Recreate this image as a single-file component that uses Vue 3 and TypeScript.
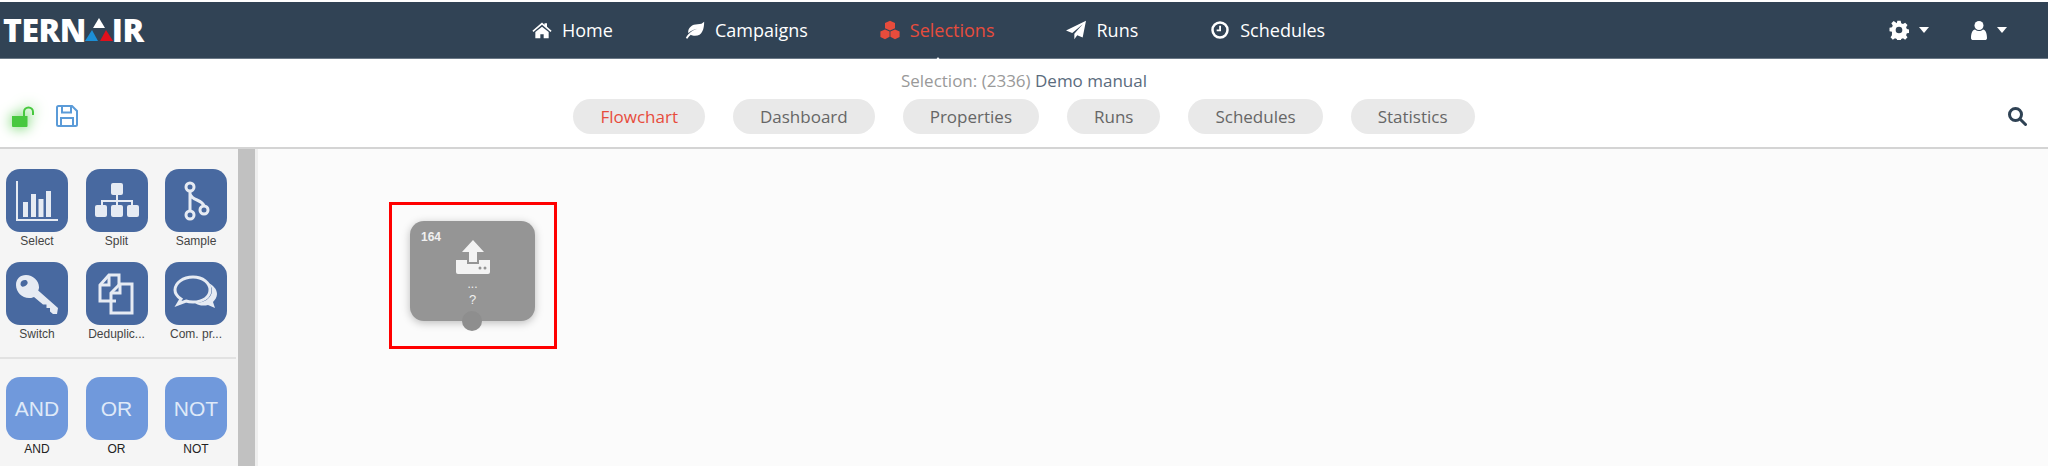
<script setup lang="ts">
const nav = [
  { label: 'Home', icon: 'home' },
  { label: 'Campaigns', icon: 'leaf' },
  { label: 'Selections', icon: 'cubes', active: true },
  { label: 'Runs', icon: 'plane' },
  { label: 'Schedules', icon: 'clock' },
]
const tabs = ['Flowchart', 'Dashboard', 'Properties', 'Runs', 'Schedules', 'Statistics']
const tools = [
  { label: 'Select', icon: 'chart' },
  { label: 'Split', icon: 'tree' },
  { label: 'Sample', icon: 'fork' },
  { label: 'Switch', icon: 'key' },
  { label: 'Deduplic...', icon: 'files' },
  { label: 'Com. pr...', icon: 'chat' },
]
const logic = ['AND', 'OR', 'NOT']
</script>

<template>
  <div class="page">
    <header class="topbar">
      <div class="logo">TERN<svg class="logo-mark" viewBox="0 0 30 26" width="30" height="26"><path d="M15 1 21 11H9z" fill="#fff"/><path d="M8 13 14 24H1z" fill="#1c8fd6"/><path d="M22 13 29 24H16z" fill="#e0101c"/></svg>IR</div>
      <nav class="main-nav">
        <a v-for="item in nav" :key="item.label" class="nav-item" :class="{ active: item.active }">
          <svg class="nav-icon" viewBox="0 0 24 24" fill="currentColor">
            <path v-if="item.icon === 'home'" d="M12 3 15 5.6V4h3v4.2L23.5 13l-1.2 1.3L12 5.6 1.7 14.3.5 13zM4 14.5 12 8l8 6.5V22h-6v-5h-4v5H4z"/>
            <path v-else-if="item.icon === 'leaf'" d="M23 2c0 8-2 17-11 17-2 0-4-.6-5-1.4C5.500 19 4 20.500 2.800 22.500L1 21.500c1.500-3 4-6 8-8.500 2-1.200 4-2 6-2.500-4 .5-8 2.500-11 5.500C2.800 9 9 5 15 5c4 0 6-1 8-3z"/>
            <path v-else-if="item.icon === 'cubes'" d="M12 1 18 3.500V10l-6 2.500L6 10V3.500zM6 11.500l5.500 2.300V20L6 23 .5 20.500v-6.700zM18 11.500l5.500 2.300v6.700L18 23l-5.500-3v-6.200z"/>
            <path v-else-if="item.icon === 'plane'" d="M24 1 20 21l-6.500-2.800L10 23v-6.500L20 5 7.500 15.500 0 12.500z"/>
            <path v-else fill-rule="evenodd" d="M12 1.500a10.500 10.500 0 1 1 0 21 10.500 10.500 0 0 1 0-21zm0 3a7.500 7.500 0 1 0 0 15 7.500 7.500 0 0 0 0-15zM11 7h2.200v6.500H8V11.500h3z"/>
          </svg>
          <span>{{ item.label }}</span>
        </a>
      </nav>
      <div class="nav-right">
        <span class="drop">
          <svg width="20" height="20" viewBox="0 0 24 24" fill="#fff"><path fill-rule="evenodd" d="M10 1h4l.6 3 2.200.9 2.600-1.700 2.800 2.800-1.700 2.600.9 2.200 3 .6v4l-3 .6-.9 2.200 1.700 2.600-2.800 2.800-2.600-1.700-2.200.9-.6 3h-4l-.6-3-2.200-.9-2.600 1.700-2.800-2.800 1.700-2.600L3.600 14l-3-.6v-4l3-.6.9-2.200-1.700-2.600 2.800-2.800 2.600 1.700L9.400 4zM12 8a4 4 0 1 0 0 8 4 4 0 0 0 0-8z"/></svg>
          <i class="caret"></i>
        </span>
        <span class="drop">
          <svg width="16" height="20" viewBox="0 0 16 20" fill="#fff"><circle cx="8" cy="5.500" r="4.500"/><path d="M0 18c0-5 1.500-8 4-8.500 2.500 2 5.500 2 8 0 2.500.5 4 3.500 4 8.500 0 1.500-1 2-2 2H2c-1 0-2-.5-2-2z"/></svg>
          <i class="caret"></i>
        </span>
      </div>
    </header>

    <section class="subbar">
      <div class="tools-left">
        <span class="lock">
          <svg width="24" height="21" viewBox="0 0 24 21" fill="#47c83e"><path d="M0 10h15.500v10a1 1 0 0 1-1 1H1a1 1 0 0 1-1-1z"/><path d="M11 10V6a5.500 5.500 0 0 1 11 0v3h-2V6a3.500 3.500 0 0 0-7 0v4z"/></svg>
        </span>
        <svg width="22" height="22" viewBox="0 0 22 22" fill="none" stroke="#5b9bd8" stroke-width="2"><path d="M1 2.500A1.500 1.500 0 0 1 2.500 1H16l5 5v13.500a1.500 1.500 0 0 1-1.500 1.500h-17A1.500 1.500 0 0 1 1 19.500z"/><path d="M6 1v6.500h9V1M5 21v-8h12v8"/></svg>
      </div>
      <div class="sub-center">
        <div class="crumb">Selection: (2336) <b>Demo manual</b></div>
        <div class="tabs">
          <a v-for="(t, i) in tabs" :key="t" class="tab" :class="{ on: i === 0 }">{{ t }}</a>
        </div>
      </div>
      <svg class="search" width="20" height="20" viewBox="0 0 20 20" fill="none" stroke="#2f4254" stroke-width="3"><circle cx="8.500" cy="8.500" r="6"/><path d="m13 13 5.500 5.500" stroke-linecap="round"/></svg>
    </section>

    <main class="work">
      <aside class="palette">
        <div class="grid">
          <div v-for="t in tools" :key="t.label" class="tool">
            <span class="btn dark">
              <svg width="46" height="46" viewBox="0 0 46 46" fill="#e6ebf3" stroke="none">
                <g v-if="t.icon === 'chart'">
                  <path d="M2 3h2v38h40v2H2z"/><path d="M9 24h5v15H9zM17 16h5v23h-5zM24.500 21h5v18h-5zM32 13h5v26h-5z"/>
                </g>
                <g v-else-if="t.icon === 'tree'">
                  <rect x="17" y="5" width="12" height="12" rx="2"/><path d="M22 17h2v5h15v6h-2v-4H24v4h-2v-4H9v4H7v-6h15z"/><rect x="1" y="27" width="12" height="12" rx="2"/><rect x="17" y="27" width="12" height="12" rx="2"/><rect x="33" y="27" width="12" height="12" rx="2"/>
                </g>
                <g v-else-if="t.icon === 'fork'" fill="none" stroke="#e6ebf3" stroke-width="3">
                  <circle cx="17" cy="9" r="4"/><circle cx="17" cy="37" r="4"/><circle cx="31" cy="32" r="4"/><path d="M17 13v20M17 16c2 7 12 5 14 12"/>
                </g>
                <g v-else-if="t.icon === 'key'">
                  <path fill-rule="evenodd" d="M12 4c7 0 13 6 13 12 0 1.500-.3 2.500-.8 3.500L44 37l-1 6h-4l-3-2.500V37h-3.500v-3.500H29L20 26c-2 1-3.500 1-5 1C8 27 2 21 2 14 2 8 6 4 12 4zm-1 5c-2.500 0-4.500 1.500-4.500 4 0 1 .5 2 1.500 2.500 1 .5 3 0 4.500-1.500 1-1 1.500-2 1-3-.4-1.400-1.300-2-2.500-2z"/>
                </g>
                <g v-else-if="t.icon === 'files'" fill="none" stroke="#e6ebf3" stroke-width="3">
                  <path d="M22 30H6V14L15 4h10v10"/><path d="M15 4v10H6"/><path d="M17 39V22l9-9h12v29H17z"/><path d="M26 13v9h-9"/>
                </g>
                <g v-else fill="none" stroke="#e6ebf3" stroke-width="3">
                  <path d="M20 6C10 6 2 12 2 19c0 4 3 7 6 9l-3 5 8-3c2 .7 5 1 7 1 10 0 17-5 17-12S30 6 20 6z"/>
                  <path d="M35 12c5 2 9 6 9 11 0 3-2 6-4 8l2 6-7-3c-4 1-9 1-13-2 8 0 17-4 17-13 0-3-2-5-4-7z" fill="#e6ebf3" stroke="none"/>
                </g>
              </svg>
            </span>
            <span class="cap">{{ t.label }}</span>
          </div>
        </div>
        <hr class="sep" />
        <div class="grid">
          <div v-for="l in logic" :key="l" class="tool">
            <span class="btn light">{{ l }}</span>
            <span class="cap black">{{ l }}</span>
          </div>
        </div>
      </aside>
      <div class="scroll"></div>
      <div class="canvas">
        <div class="mark"></div>
        <div class="node">
          <span class="node-id">164</span>
          <svg class="node-icon" width="34" height="34" viewBox="0 0 34 34" fill="#f3f3f3"><path d="M17 0 28 12h-7v10h-8V12H6z"/><path d="M0 20h11v4h12v-4h11v12a2 2 0 0 1-2 2H2a2 2 0 0 1-2-2z"/><circle cx="24" cy="28" r="1.500" fill="#959595"/><circle cx="29" cy="28" r="1.500" fill="#959595"/></svg>
          <span class="node-dots">...</span>
          <span class="node-q">?</span>
          <span class="node-port"></span>
        </div>
      </div>
    </main>
  </div>
</template>

<style>
html, body { margin: 0; padding: 0; background: #fff; overflow: hidden; }
</style>

<style scoped>
.page { width: 2048px; height: 466px; display: flex; flex-direction: column; font-family: "Open Sans", sans-serif; overflow: hidden; }
.topbar { height: 56px; margin-top: 2px; background: #314355; display: flex; align-items: center; position: relative; border-bottom: 1px solid #6a7886; box-sizing: content-box; }
.logo { width: 150px; margin-left: 3px; font: 800 32px/1 "Open Sans", sans-serif; color: #fff; letter-spacing: -.5px; display: flex; align-items: center; }
.logo-mark { margin: 0 -2px; }
.main-nav { display: flex; margin-left: 379px; align-items: center; }
.nav-item { display: flex; align-items: center; gap: 10px; color: #fff; font-size: 18px; margin-right: 72px; position: relative; }
.nav-item.active { color: #e74c3c; }
.nav-item.active::after { content: ""; position: absolute; left: 50%; bottom: -22px; margin-left: -4px; border: 5px solid transparent; border-bottom: 7px solid #fff; border-top: 0; }
.nav-icon { width: 20px; height: 20px; }
.nav-right { margin-left: auto; display: flex; gap: 42px; padding-right: 41px; }
.drop { display: flex; align-items: center; gap: 10px; }
.caret { border: 5px solid transparent; border-top: 6px solid #fff; border-bottom: 0; }
.subbar { height: 88px; display: flex; position: relative; border-bottom: 2px solid #d4d4d4; background: #fff; }
.tools-left { position: absolute; left: 12px; top: 46px; display: flex; align-items: center; gap: 20px; }
.lock { display: flex; filter: drop-shadow(0 0 7px #47c83e); }
.sub-center { flex: 1; display: flex; flex-direction: column; align-items: center; }
.crumb { margin-top: 10px; margin-left: 0; font-size: 17px; line-height: 24px; color: #999; }
.crumb b { font-weight: 400; color: #5a6b7d; }
.tabs { display: flex; gap: 28px; margin-top: 6px; }
.tab { height: 35px; line-height: 35px; padding: 0 27px; border-radius: 18px; background: #e9e9e9; color: #666; font-size: 17px; }
.tab.on { color: #e74c3c; }
.search { position: absolute; right: 21px; top: 47px; }
.work { flex: 1; display: flex; min-height: 0; }
.palette { width: 238px; background: #f5f5f5; box-sizing: border-box; padding: 20px 2px 0 6px; }
.grid { display: grid; grid-template-columns: repeat(3, 62px); column-gap: 17.500px; row-gap: 12px; }
.tool { display: flex; flex-direction: column; align-items: center; width: 62px; }
.btn { width: 62px; height: 63px; border-radius: 14px; display: flex; align-items: center; justify-content: center; }
.btn.dark { background: #4869a0; }
.btn.light { background: #7099dc; color: #dfe9f8; font: 400 21px "Liberation Sans", Arial, sans-serif; }
.cap { font: 12px/18px "Liberation Sans", Arial, sans-serif; color: #444; white-space: nowrap; }
.cap.black { color: #222; }
.sep { border: 0; border-top: 2px solid #e2e2e2; margin: 14px 0 18px -6px; width: 236px; }
.scroll { width: 17px; background: #c1c1c1; }
.canvas { flex: 1; position: relative; background: #fbfbfb; border-left: 3px solid #eee; }
.mark { position: absolute; left: 131px; top: 53px; width: 168px; height: 147px; border: 3px solid #f00; box-sizing: border-box; }
.node { position: absolute; left: 152px; top: 72px; width: 125px; height: 100px; border-radius: 14px; background: #959595; box-shadow: 0 2px 8px rgba(0,0,0,.25); color: #f0f0f0; display: flex; flex-direction: column; align-items: center; font-family: "Liberation Sans", Arial, sans-serif; }
.node-id { position: absolute; left: 11px; top: 9px; font: 700 12px "Liberation Sans", Arial, sans-serif; }
.node-icon { margin-top: 19px; }
.node-dots { font-size: 12px; line-height: 10px; margin-top: 5px; }
.node-q { font-size: 13px; line-height: 16px; margin-top: 3px; }
.node-port { position: absolute; left: 52px; bottom: -10px; width: 20px; height: 20px; border-radius: 50%; background: #8e8e8e; }
</style>
